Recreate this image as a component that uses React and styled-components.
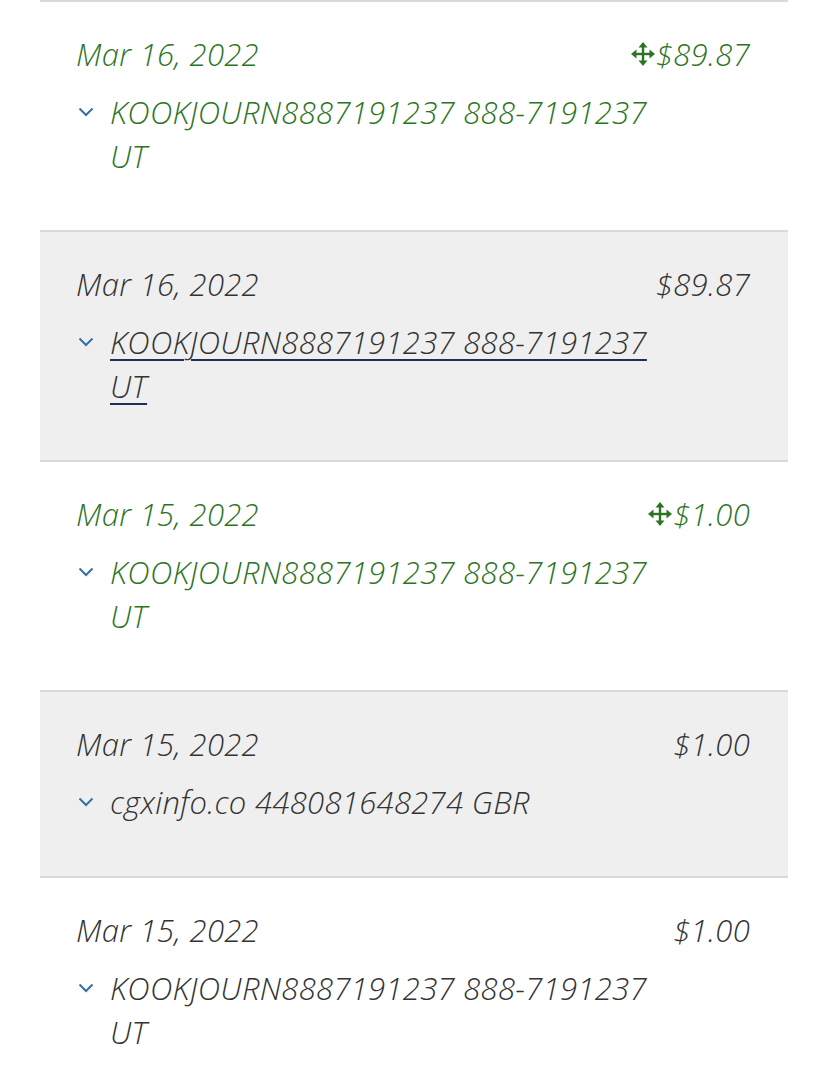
import React from 'react';
import styled, { createGlobalStyle } from 'styled-components';

const GlobalStyle = createGlobalStyle`
  body {
    margin: 0;
    background: #fff;
    font-family: 'Open Sans', 'Liberation Sans', sans-serif;
  }
`;

const List = styled.ul`
  list-style: none;
  margin: 0 40px;
  padding: 0;
`;

const Row = styled.li`
  border-top: 2px solid #d9d9d9;
  background: ${({ shaded }) => (shaded ? '#efefef' : '#fff')};
  padding: 30px 38px 52px 36px;
  color: ${({ pending }) => (pending ? '#2c7424' : '#333')};
  font-style: italic;
  font-weight: 350;
  font-size: 31px;
  line-height: 44px;
  letter-spacing: 0.3px;
`;

const Top = styled.div`
  display: flex;
  justify-content: space-between;
  align-items: center;
  margin-bottom: 14px;
`;

const Amount = styled.span`
  display: flex;
  align-items: center;
  gap: 1px;
`;

const Desc = styled.div`
  display: flex;
  align-items: flex-start;
`;

const Chevron = styled.span`
  display: flex;
  width: 32px;
  height: 44px;
  align-items: center;
  padding-left: 2px;
  flex-shrink: 0;
`;

const DescText = styled.span`
  max-width: 570px;
  text-decoration: ${({ link }) => (link ? 'underline' : 'none')};
  text-decoration-color: #1b2f57;
  text-decoration-thickness: 2px;
  text-underline-offset: 5px;
`;

const MoveIcon = () => (
  <svg width="24" height="24" viewBox="0 0 24 24" fill="currentColor">
    <rect x="10.8" y="4" width="2.4" height="16" />
    <rect x="4" y="10.8" width="16" height="2.4" />
    <path d="M12 0 L16.5 5.5 L7.5 5.5 Z" />
    <path d="M12 24 L16.5 18.5 L7.5 18.5 Z" />
    <path d="M0 12 L5.5 7.5 L5.5 16.5 Z" />
    <path d="M24 12 L18.5 7.5 L18.5 16.5 Z" />
  </svg>
);

const ChevronIcon = () => (
  <svg width="16" height="10" viewBox="0 0 16 10">
    <path d="M1.5 1.5 L8 8 L14.5 1.5" fill="none" stroke="#3a6ea8" strokeWidth="2" />
  </svg>
);

const rows = [
  { date: 'Mar 16, 2022', amount: '$89.87', desc: 'KOOKJOURN8887191237 888-7191237 UT', pending: true },
  { date: 'Mar 16, 2022', amount: '$89.87', desc: 'KOOKJOURN8887191237 888-7191237 UT', link: true },
  { date: 'Mar 15, 2022', amount: '$1.00', desc: 'KOOKJOURN8887191237 888-7191237 UT', pending: true },
  { date: 'Mar 15, 2022', amount: '$1.00', desc: 'cgxinfo.co 448081648274 GBR' },
  { date: 'Mar 15, 2022', amount: '$1.00', desc: 'KOOKJOURN8887191237 888-7191237 UT' },
];

const App = () => (
  <>
    <GlobalStyle />
    <List>
      {rows.map((r, i) => (
        <Row key={i} shaded={i % 2 === 1} pending={r.pending}>
          <Top>
            <span>{r.date}</span>
            <Amount>
              {r.pending && <MoveIcon />}
              {r.amount}
            </Amount>
          </Top>
          <Desc>
            <Chevron>
              <ChevronIcon />
            </Chevron>
            <DescText link={r.link}>{r.desc}</DescText>
          </Desc>
        </Row>
      ))}
    </List>
  </>
);

export default App;
